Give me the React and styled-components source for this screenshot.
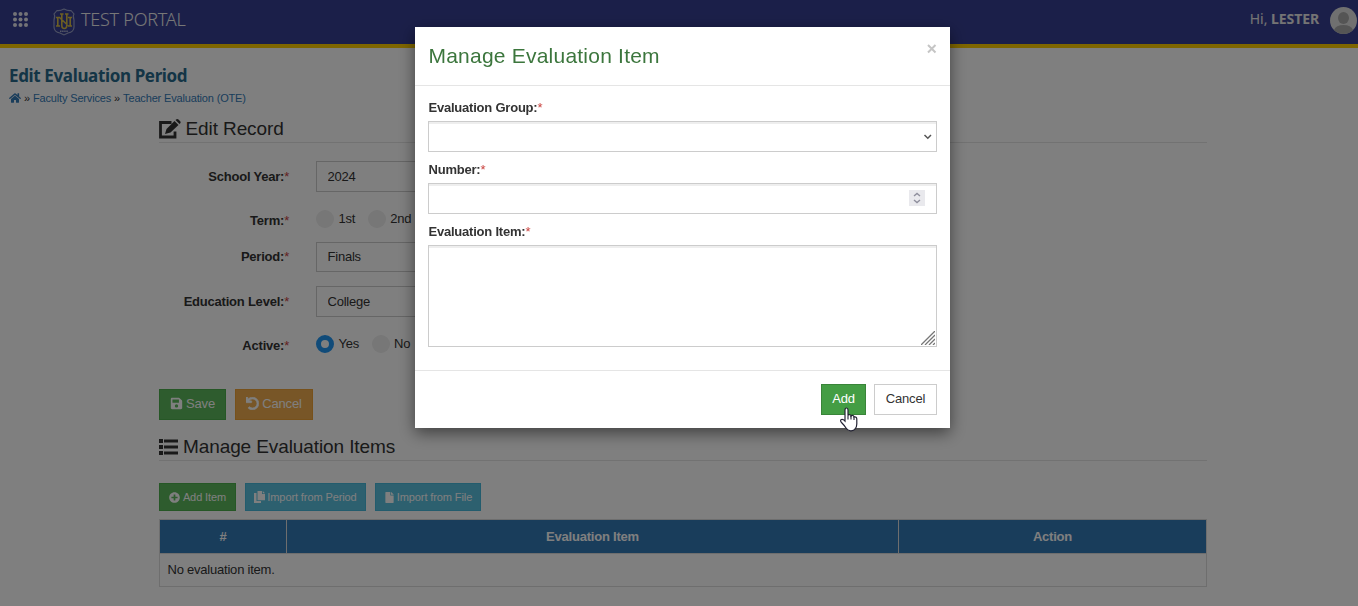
import React, { useState } from 'react'
import styled, { createGlobalStyle } from 'styled-components'
import { FaHome, FaSave, FaUndo, FaPlusCircle, FaFile } from 'react-icons/fa'

const GlobalStyle = createGlobalStyle`
	*, *::before {
		box-sizing: border-box;
	}
	body {
		margin: 0;
		overflow: hidden;
		background: #fff;
		color: #333;
		font: 13px/18px "Liberation Sans", Arial, sans-serif;
		letter-spacing: -0.22px;
	}
`

const Page = styled.div`
	height: 606px;
	overflow: hidden;
`

const TopBar = styled.header`
	display: flex;
	align-items: center;
	height: 48px;
	padding: 0 0 4px 13px;
	background: #373f93;
	border-bottom: 4px solid #ffcc00;
	color: #fff;
	font-family: "Noto Sans", sans-serif;
`

const MenuDots = styled.svg`
	width: 15px;
	height: 15px;
	margin-top: -4px;
	position: relative;
	top: 1px;
	fill: #e6e6ee;
`

const Crest = styled.svg`
	width: 24px;
	height: 28px;
	margin: 3px 0 0 24px;
`

const Brand = styled.div`
	flex: 1;
	margin: -3px 0 0 5px;
	font-size: 18px;
	font-weight: 300;
	line-height: 24px;
	letter-spacing: -0.25px;
	color: #eee;
`

const Greeting = styled.div`
	margin: -2px 11px 0 0;
	font-size: 14px;
	letter-spacing: 0;
	color: #e8e8e8;

	b {
		letter-spacing: -0.1px;
	}
`

const Avatar = styled.svg`
	width: 27px;
	height: 27px;
	margin: 1px 1px 0 0;
`

const PageHead = styled.div`
	padding: 17px 0 0 9px;
	color: #31708f;
`

const PageTitle = styled.h1`
	margin: 0;
	font: 700 17px/22px "Noto Sans", sans-serif;
	letter-spacing: -0.36px;
	color: #286a8c;
`

const Crumbs = styled.div`
	display: flex;
	align-items: center;
	gap: 3px;
	height: 14px;
	margin-top: 4px;
	font-size: 11px;
	line-height: 14px;
	letter-spacing: -0.16px;
	color: #337ab7;

	span {
		color: #333;
	}
	svg {
		font-size: 12px;
	}
`

const Content = styled.main`
	width: 1048px;
	margin-left: 159px;
`

const SectionTitle = styled.h2`
	display: flex;
	align-items: center;
	gap: ${props => props.$gap};
	height: 28px;
	margin: ${props => props.$top} 0 0;
	padding-top: 1px;
	border-bottom: 1px solid #e5e5e5;
	font-size: 19px;
	font-weight: normal;
	letter-spacing: -0.1px;
	color: #333;
`

const Form = styled.div`
	padding-top: 18px;
`

const FormRow = styled.div`
	display: flex;
	align-items: center;
	height: ${props => props.$height};
	margin-bottom: ${props => props.$after};
`

const FormLabel = styled.label`
	width: 130px;
	margin-right: 27px;
	padding-top: ${props => props.$drop || '0'};
	text-align: right;
	font-weight: bold;
`

const Star = styled.span`
	color: #c9423e;
	font-weight: normal;
`

const FormInput = styled.input`
	width: 420px;
	height: 100%;
	padding: 0 10.5px 1px;
	border: 1px solid #ccc;
	background: #fff;
	color: #333;
	font: 13px "Liberation Sans", Arial, sans-serif;
	letter-spacing: -0.22px;
`

const Radio = styled.span`
	display: flex;
	align-items: center;
	gap: 4.5px;
	margin-right: 12.5px;
	white-space: nowrap;

	&::before {
		content: '';
		width: 18px;
		height: 18px;
		border: ${props => props.$checked ? '5.5px solid #2196f3' : '0'};
		border-radius: 50%;
		background: ${props => props.$checked ? '#fff' : '#eee'};
	}
`

const palette = {
  success: ['#5cb85c', '#4cae4c'],
  warning: ['#f0ad4e', '#eea236'],
  info: ['#5bc0de', '#46b8da'],
  add: ['#449d44', '#398439'],
  plain: ['#fff', '#ccc']
}

const Button = styled.button`
	display: flex;
	align-items: center;
	justify-content: center;
	gap: ${props => props.$gap || '3px'};
	width: ${props => props.$width};
	height: ${props => props.$small ? '28px' : '31px'};
	padding: ${props => props.$small ? '0' : '0 0 2px'};
	border: 1px solid ${props => palette[props.$kind][1]};
	background: ${props => palette[props.$kind][0]};
	color: ${props => props.$kind === 'plain' ? '#333' : '#fff'};
	font: ${props => props.$small ? '11px' : '13px'} "Liberation Sans", Arial, sans-serif;
	letter-spacing: ${props => props.$small ? '-0.1px' : '-0.15px'};
	white-space: nowrap;
`

const ButtonRow = styled.div`
	display: flex;
	gap: 9px;
	margin-top: ${props => props.$top};
`

const Table = styled.table`
	width: 100%;
	margin-top: 8px;
	border-collapse: collapse;
	table-layout: fixed;

	th {
		height: 34px;
		padding: 0;
		border: 1px solid #ddd;
		background: #337ab7;
		color: #fff;
	}
	td {
		height: 33px;
		padding: 0 7.5px 1px;
		border: 1px solid #ddd;
	}
`

const Backdrop = styled.div`
	position: fixed;
	inset: 0;
	display: flex;
	align-items: flex-start;
	padding: 27px 0 0 415px;
	background: rgba(0, 0, 0, 0.5);
`

const Dialog = styled.div`
	width: 535px;
	height: 401px;
	background: #fff;
	box-shadow: 0 5px 15px rgba(0, 0, 0, 0.5);
`

const DialogHead = styled.div`
	display: flex;
	justify-content: space-between;
	height: 59px;
	padding: 16px 13px 0 13.5px;
	border-bottom: 1px solid #e5e5e5;
`

const DialogTitle = styled.h3`
	margin: 0;
	font-size: 21px;
	line-height: 26px;
	font-weight: normal;
	letter-spacing: 0.22px;
	color: #3c763d;
`

const Close = styled.svg`
	width: 11px;
	height: 11px;
	stroke: #c5c5c5;
	stroke-width: 2;
`

const DialogBody = styled.div`
	height: 285px;
	padding: 13px 13px 0;
	border-bottom: 1px solid #e5e5e5;
`

const Field = styled.div`
	margin-bottom: 9px;

	label {
		display: block;
		height: 22px;
		padding-left: 0.5px;
		font-weight: bold;
	}
`

const Control = styled.div`
	display: flex;
	justify-content: flex-end;
	align-items: ${props => props.$area ? 'flex-end' : 'center'};
	height: ${props => props.$area ? '102px' : '31px'};
	padding: ${props => props.$pad || '0'};
	border: 1px solid #ccc;
	box-shadow: inset 0 2px 0 #eee;
`

const Stepper = styled.svg`
	width: 16px;
	height: 16px;
	background: #e9e9ed;
`

const DialogFoot = styled.div`
	display: flex;
	justify-content: flex-end;
	gap: 8px;
	padding: 13px 13px 0;
`

const Pointer = styled.svg`
	position: fixed;
	left: 839px;
	top: 407px;
	width: 20px;
	height: 26px;
`

const LabelText = ({ children }) => (
  <>{children}:<Star>*</Star></>
)

const CrestLogo = () => (
  <Crest viewBox="0 0 24 28">
    <path d="M5 2.500Q8 3 12 1Q16 3 19 2.500L22 6Q20.500 8 22 12V19Q22 24 16 25L12 27L8 25Q2 24 2 19V12Q3.500 8 2 6Z" fill="none" stroke="#9ca3c8" strokeWidth="1.1" />
    <path d="M4 9.500H7.500L16 17.500M5.800 9.500V18M4 18H8M16 9.500H20M18.200 9.500V18M16 18H20M8 6H11.500M9.800 6V17.500Q9.800 20.500 12.300 20.500Q14.800 20.500 14.800 17.500V6M13 6H16.500" fill="none" stroke="#d8bd46" strokeWidth="1.6" />
    <path d="M8 23.300H16" stroke="#aab0cf" strokeWidth="1.6" strokeDasharray="1.5 .6" />
  </Crest>
)

const EditIcon = () => (
  <svg width="22" height="20" viewBox="0 0 22 20" fill="none">
    <path d="M12.500 3.500H1.500V18H16V12.500" stroke="#333" strokeWidth="2.800" />
    <path d="M6 15L7.500 10L15.500 2L19.500 6L11.500 13.500ZM16.500 1L17.500 0.300Q18.500 -0.300 19.500 0.600L21.200 2.300Q22 3.300 21.300 4.200L20.500 5Z" fill="#333" />
  </svg>
)

const ListIcon = () => (
  <svg width="19" height="16" viewBox="0 0 19 16" fill="#333">
    {[0, 6, 12].map(y => (
      <path key={y} d={`M0 ${y}h4v4h-4zM5 ${y + 0.5}h14v3h-14z`} />
    ))}
  </svg>
)

const PagesIcon = () => (
  <svg width="11" height="12" viewBox="0 0 11 12" fill="#fff">
    <path d="M0 2H2.500V10H7V12H0ZM3.500 0H8V3H11V9.200H3.500ZM8.800 0L11 2.200H8.800Z" />
  </svg>
)

const UndoIcon = styled(FaUndo)`
	stroke: currentColor;
	stroke-width: 25;
`

const App = () => {
  const [year, setYear] = useState('2024')
  const [period, setPeriod] = useState('Finals')
  const [level, setLevel] = useState('College')

  const getDialog = () => (
    <Backdrop>
      <Dialog>
        <DialogHead>
          <DialogTitle>Manage Evaluation Item</DialogTitle>
          <Close viewBox="0 0 11 11"><path d="M2 2L9.500 9.500M9.500 2L2 9.500" /></Close>
        </DialogHead>
        <DialogBody>
          <Field>
            <label><LabelText>Evaluation Group</LabelText></label>
            <Control $pad="0 4px 0 0">
              <svg width="9" height="7" fill="none" stroke="#555" strokeWidth="1.5"><path d="M1.500 2L4.800 5.200L8 2" /></svg>
            </Control>
          </Field>
          <Field>
            <label><LabelText>Number</LabelText></label>
            <Control $pad="0 11px 1px 0">
              <Stepper viewBox="0 0 16 16" fill="none" stroke="#8f8f9d" strokeWidth="1.4">
                <path d="M5 6L8 3.500L11 6M5 10L8 12.500L11 10" />
              </Stepper>
            </Control>
          </Field>
          <Field>
            <label><LabelText>Evaluation Item</LabelText></label>
            <Control $area $pad="0 1px 1px 0">
              <svg width="14" height="14" stroke="#777" strokeWidth="1.3"><path d="M0 14L14 0M4 14L14 4M8 14L14 8M12 14L14 12" /></svg>
            </Control>
          </Field>
        </DialogBody>
        <DialogFoot>
          <Button $kind="add" $width="45px">Add</Button>
          <Button $kind="plain" $width="63px">Cancel</Button>
        </DialogFoot>
      </Dialog>
    </Backdrop>
  )

  return (
    <>
      <GlobalStyle />
      <Page>
        <TopBar>
          <MenuDots viewBox="0 0 15 15">
            {[2, 7.5, 13].map(y => [2, 7.5, 13].map(x => <circle key={x + '-' + y} cx={x} cy={y} r="2" />))}
          </MenuDots>
          <CrestLogo />
          <Brand>TEST PORTAL</Brand>
          <Greeting>Hi, <b>LESTER</b></Greeting>
          <Avatar viewBox="0 0 27 27">
            <circle cx="13.500" cy="13.500" r="13.500" fill="#e1e1e1" />
            <ellipse cx="13.500" cy="11" rx="5.500" ry="6" fill="#aaa" />
            <path d="M4 23Q6 18 13.500 18Q21 18 23 23Q19 27 13.500 27Q8 27 4 23Z" fill="#aaa" />
          </Avatar>
        </TopBar>

        <PageHead>
          <PageTitle>Edit Evaluation Period</PageTitle>
          <Crumbs>
            <FaHome /> <span>»</span> Faculty Services <span>»</span> Teacher Evaluation (OTE)
          </Crumbs>
        </PageHead>

        <Content>
          <SectionTitle $top="10px" $gap="4.5px"><EditIcon /> Edit Record</SectionTitle>
          <Form>
            <FormRow $height="31px" $after="17px">
              <FormLabel><LabelText>School Year</LabelText></FormLabel>
              <FormInput value={year} onChange={e => setYear(e.target.value)} />
            </FormRow>
            <FormRow $height="20px" $after="13px">
              <FormLabel $drop="3px"><LabelText>Term</LabelText></FormLabel>
              <Radio>1st</Radio>
              <Radio>2nd</Radio>
            </FormRow>
            <FormRow $height="30px" $after="14px">
              <FormLabel><LabelText>Period</LabelText></FormLabel>
              <FormInput value={period} onChange={e => setPeriod(e.target.value)} />
            </FormRow>
            <FormRow $height="31px" $after="17px">
              <FormLabel><LabelText>Education Level</LabelText></FormLabel>
              <FormInput value={level} onChange={e => setLevel(e.target.value)} />
            </FormRow>
            <FormRow $height="20px" $after="0">
              <FormLabel $drop="3px"><LabelText>Active</LabelText></FormLabel>
              <Radio $checked>Yes</Radio>
              <Radio>No</Radio>
            </FormRow>
          </Form>
          <ButtonRow $top="35px">
            <Button $kind="success" $width="67px"><FaSave /> Save</Button>
            <Button $kind="warning" $width="78px"><UndoIcon /> Cancel</Button>
          </ButtonRow>

          <SectionTitle $top="13px" $gap="5px"><ListIcon /> Manage Evaluation Items</SectionTitle>
          <ButtonRow $top="22px">
            <Button $small $kind="success" $width="77px"><FaPlusCircle /> Add Item</Button>
            <Button $small $kind="info" $width="121px" $gap="2px"><PagesIcon /> Import from Period</Button>
            <Button $small $kind="info" $width="106px" $gap="2px"><FaFile size={11} /> Import from File</Button>
          </ButtonRow>
          <Table>
            <colgroup>
              <col width="127" />
              <col width="612" />
              <col />
            </colgroup>
            <thead>
              <tr><th>#</th><th>Evaluation Item</th><th>Action</th></tr>
            </thead>
            <tbody>
              <tr><td colSpan="3">No evaluation item.</td></tr>
            </tbody>
          </Table>
        </Content>
      </Page>
      {getDialog()}
      <Pointer viewBox="0 0 20 26">
        <path d="M6 14V3Q6 1 7.500 1Q9 1 9 3V8.500Q9.500 7.200 11 7.700Q12 8 12 9Q13 8 14 8.500Q15 9 15 10Q17.800 9.500 17.800 12V17Q17.800 20 16 22Q15 24 11.500 23.800Q8.500 23.500 7 21Q5 18 2.500 15.500Q0.800 13.500 2.300 12.500Q4 11.800 6 14Z" fill="#fff" stroke="#223" strokeWidth="1.2" />
        <path d="M9 8.500V12.500M12 9V12.500M15 10V13" stroke="#223" strokeWidth="1.1" />
      </Pointer>
    </>
  )
}

export default App
